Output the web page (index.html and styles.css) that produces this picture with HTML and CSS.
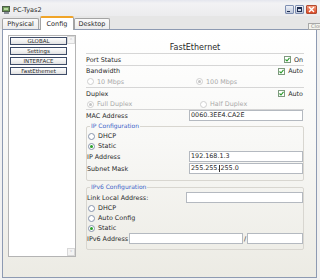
FILE: index.html
```html
<!DOCTYPE html>
<html lang="en">
<head>
    <meta charset="UTF-8">
    <title>PC-Tyas2</title>
    <link rel="stylesheet" href="styles.css">
</head>
<body>
    <div class="window">
        <div class="titlebar">
            <svg class="app-icon" width="9" height="8" viewBox="0 0 9 8">
                <rect x="0.5" y="0.5" width="7" height="5" fill="#6f9a5a" stroke="#4d5e48"/>
                <rect x="2" y="2" width="4" height="2" fill="#b8d8a0"/>
                <rect x="2" y="6" width="5" height="2" fill="#8a8f98"/>
            </svg>
            <span class="title">PC-Tyas2</span>
            <div class="controls">
                <span class="ctl ctl-min"><i></i></span>
                <span class="ctl ctl-max"><i></i></span>
                <span class="ctl ctl-close">
                    <svg width="7" height="7" viewBox="0 0 7 7"><path d="M1 1L6 6M6 1L1 6" stroke="#fff" stroke-width="1.4"/></svg>
                </span>
            </div>
        </div>

        <div class="tabbar">
            <div class="tab tab-physical">Physical</div>
            <div class="tab tab-config active">Config</div>
            <div class="tab tab-desktop">Desktop</div>
        </div>

        <div class="frame">
            <div class="sidebar">
                <div class="nav">
                    <div class="nav-btn">GLOBAL</div>
                    <div class="nav-btn">Settings</div>
                    <div class="nav-btn">INTERFACE</div>
                    <div class="nav-btn">FastEthernet</div>
                </div>
                <div class="scroll">
                    <span class="arrow">&#708;</span>
                    <span class="arrow">&#709;</span>
                </div>
            </div>

            <div class="panel">
                <div class="panel-title">FastEthernet</div>

                <div class="row h12 sep">
                    <span>Port Status</span>
                    <span class="check"><span class="box"><svg width="5" height="5" viewBox="0 0 5 5"><path d="M0.5 2.5L2 4L4.5 0.8" fill="none" stroke="#2a9a2a" stroke-width="1.1"/></svg></span>On</span>
                </div>
                <div class="row">
                    <span>Bandwidth</span>
                    <span class="check"><span class="box"><svg width="5" height="5" viewBox="0 0 5 5"><path d="M0.5 2.5L2 4L4.5 0.8" fill="none" stroke="#2a9a2a" stroke-width="1.1"/></svg></span>Auto</span>
                </div>
                <div class="row h12 sep opts">
                    <span class="opt off col-speed"><span class="radio"></span>10 Mbps</span>
                    <span class="opt off"><span class="radio on"></span>100 Mbps</span>
                </div>
                <div class="row h11">
                    <span>Duplex</span>
                    <span class="check"><span class="box"><svg width="5" height="5" viewBox="0 0 5 5"><path d="M0.5 2.5L2 4L4.5 0.8" fill="none" stroke="#2a9a2a" stroke-width="1.1"/></svg></span>Auto</span>
                </div>
                <div class="row h11 sep opts">
                    <span class="opt off col-duplex"><span class="radio on"></span>Full Duplex</span>
                    <span class="opt off"><span class="radio"></span>Half Duplex</span>
                </div>
                <div class="row h11">
                    <span>MAC Address</span>
                    <span class="field mac">0060.3EE4.CA2E</span>
                </div>

                <fieldset class="group">
                    <legend>IP Configuration</legend>
                    <div class="row"><span class="opt"><span class="radio"></span>DHCP</span></div>
                    <div class="row"><span class="opt"><span class="radio on"></span>Static</span></div>
                    <div class="row h11">
                        <span>IP Address</span>
                        <span class="field ip">192.168.1.3</span>
                    </div>
                    <div class="row h11 gap">
                        <span>Subnet Mask</span>
                        <span class="field ip">255.255.<span class="caret"></span>255.0</span>
                    </div>
                </fieldset>

                <fieldset class="group v6">
                    <legend>IPv6 Configuration</legend>
                    <div class="row h11">
                        <span>Link Local Address:</span>
                        <span class="field link"></span>
                    </div>
                    <div class="row"><span class="opt"><span class="radio"></span>DHCP</span></div>
                    <div class="row"><span class="opt"><span class="radio"></span>Auto Config</span></div>
                    <div class="row"><span class="opt"><span class="radio on"></span>Static</span></div>
                    <div class="row h11 v6-row">
                        <span>IPv6 Address</span>
                        <span class="field v6-addr"></span>
                        <span class="slash">/</span>
                        <span class="field v6-prefix"></span>
                    </div>
                </fieldset>
            </div>
        </div>

        <div class="tip">Close</div>
    </div>
</body>
</html>
```

FILE: styles.css
```css
* {
    box-sizing: border-box;
}
body {
    margin: 0;
    font-family: "DejaVu Sans", Verdana, sans-serif;
    font-size: 6.4px;
    color: #2a2a2a;
    background: #f1f1f1;
}
.window {
    position: relative;
    width: 320px;
    height: 280px;
    display: flex;
    flex-direction: column;
    overflow: hidden;
    background: #f1f1f1;
}

/* title bar */
.titlebar {
    height: 16px;
    display: flex;
    align-items: center;
    padding: 3px 3px 0 2px;
    background: linear-gradient(#e4e6ee, #f2f2f4 20%, #ececee);
}
.app-icon {
    margin-right: 2px;
}
.title {
    font-size: 6.5px;
}
.controls {
    margin-left: auto;
    display: flex;
    gap: 1px;
}
.ctl {
    width: 9px;
    height: 9px;
    border: 1px solid #7f8fb2;
    border-radius: 1px;
    background: linear-gradient(#eef1f8, #bcc6da);
    display: flex;
    align-items: center;
    justify-content: center;
}
.ctl-min i {
    width: 3px;
    height: 1px;
    margin: 4px 2px 0 0;
    background: #1e2c50;
}
.ctl-max i {
    width: 5px;
    height: 5px;
    border: 1px solid #1e2c50;
    border-top-width: 2px;
}
.ctl-close {
    width: 11px;
    margin-left: 1px;
    border-color: #b24a30;
    background: linear-gradient(#f49a7c, #dc4a28);
}

/* tabs */
.tabbar {
    height: 13px;
    display: flex;
    align-items: flex-end;
    padding-left: 2px;
    background: #e6e6e6;
}
.tab {
    height: 11px;
    border: 1px solid #a4a4a4;
    border-bottom: none;
    border-radius: 2px 2px 0 0;
    background: linear-gradient(#fafafa, #ececec);
    display: flex;
    align-items: center;
    justify-content: center;
    font-size: 6.5px;
}
.tab-physical {
    width: 37px;
    margin-right: 1px;
}
.tab-config {
    width: 34px;
}
.tab-desktop {
    width: 36px;
}
.tab.active {
    position: relative;
    z-index: 1;
    height: 14px;
    margin-bottom: -1px;
    padding-bottom: 1px;
    background: #fff;
    border-top: 2px solid #f0a428;
}

/* content frame */
.frame {
    height: 249px;
    margin: 0 3px 0 2px;
    border: 1px solid #8d9ab2;
    display: flex;
    align-items: flex-start;
    padding: 5px 0 0 5px;
    background: linear-gradient(#ffffff, #f8f8f6 45%, #ecebe4);
}

/* left list */
.sidebar {
    width: 68px;
    height: 222px;
    border: 1px solid #b4b4b4;
    background: #fff;
    display: flex;
}
.nav {
    flex: 1;
    padding: 1px 0 0 1px;
    display: flex;
    flex-direction: column;
    gap: 2px;
}
.nav-btn {
    height: 8px;
    border: 1px solid #3e4c68;
    background: linear-gradient(#ffffff, #e2e2e2);
    font-size: 5.5px;
    line-height: 6px;
    text-align: center;
}
.scroll {
    width: 8px;
    display: flex;
    flex-direction: column;
    justify-content: space-between;
}
.arrow {
    height: 8px;
    border: 1px solid #d8d8d8;
    background: #f4f4f4;
    color: #b8b8c0;
    font-size: 6px;
    line-height: 7px;
    text-align: center;
}

/* right panel */
.panel {
    width: 218px;
    margin: 7px 0 0 10px;
    display: flex;
    flex-direction: column;
}
.panel-title {
    height: 12px;
    border-bottom: 1px solid #d6d6d6;
    font-size: 8px;
    line-height: 11px;
    text-align: center;
}
.row {
    height: 10px;
    display: flex;
    align-items: center;
    white-space: nowrap;
}
.h11 {
    height: 11px;
}
.h12 {
    height: 12px;
}
.sep {
    border-bottom: 1px solid #d6d6d6;
}
.gap {
    margin-top: 1px;
}
.check {
    margin: 0 1px 0 auto;
    display: flex;
    align-items: center;
    gap: 3px;
}
.box {
    width: 7px;
    height: 7px;
    border: 1px solid #7e9a7e;
    background: #fff;
    display: flex;
    align-items: center;
    justify-content: center;
}
.opt {
    display: flex;
    align-items: center;
    gap: 3px;
    padding-left: 1px;
}
.opts .opt {
    padding-left: 1px;
}
.col-speed {
    width: 109px;
}
.col-duplex {
    width: 113px;
}
.off {
    color: #aaaaaa;
}
.radio {
    width: 7px;
    height: 7px;
    border: 1px solid #8794ac;
    border-radius: 50%;
    background: #fff;
    display: flex;
    align-items: center;
    justify-content: center;
}
.radio.on::after {
    content: "";
    width: 3px;
    height: 3px;
    border-radius: 50%;
    background: #2aa02a;
}
.off .radio {
    border-color: #cfcfcf;
}
.off .radio.on::after {
    background: #c4c4c4;
}
.field {
    height: 11px;
    border: 1px solid #b4b9c0;
    background: #fff;
    padding-left: 1px;
    line-height: 9px;
    display: flex;
    align-items: center;
}
.mac {
    width: 114px;
    margin: 0 1px 0 auto;
}
.ip {
    width: 114px;
    margin-left: auto;
}
.caret {
    width: 1px;
    height: 7px;
    background: #333;
}
.link {
    width: 117px;
    margin-left: auto;
}

/* fieldsets */
.group {
    margin: 0;
    padding: 0 0 6px 0;
    border: 1px solid #d8d6d0;
    border-radius: 2px;
}
.group legend {
    margin-left: 3px;
    padding: 0 1px;
    color: #3d63c8;
    font-size: 6px;
    line-height: 10px;
}
.v6 {
    margin-top: 1px;
    padding-bottom: 5px;
}
.v6-addr {
    width: 114px;
    margin-left: 1px;
}
.slash {
    width: 4px;
    text-align: center;
}
.v6-prefix {
    flex: 1;
}

/* tooltip left over from the close button */
.tip {
    position: absolute;
    top: 23px;
    left: 308px;
    height: 7px;
    padding: 0 2px;
    border: 1px solid #a8a8a8;
    background: #f4f4ee;
    color: #888;
    font-size: 5px;
    line-height: 5px;
    white-space: nowrap;
}
```
